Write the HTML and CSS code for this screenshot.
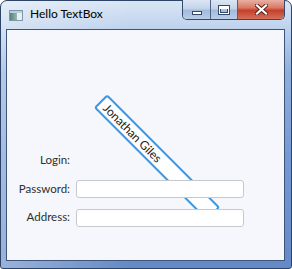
FILE: index.html
```html
<!DOCTYPE html>
<html>
<head>
<meta charset="utf-8">
<title>Hello TextBox</title>
<link rel="stylesheet" href="styles.css">
</head>
<body>
<div class="window">
  <div class="titlebar">
    <svg class="app-icon" width="14" height="11" viewBox="0 0 14 11">
      <defs>
        <linearGradient id="ig" x1="0" y1="0" x2="1" y2="0">
          <stop offset="0" stop-color="#4f7f74"/>
          <stop offset="0.5" stop-color="#8fb0a8"/>
          <stop offset="1" stop-color="#d9e4ee"/>
        </linearGradient>
      </defs>
      <rect x="0.5" y="0.5" width="13" height="10" fill="url(#ig)" stroke="#7d96a8"/>
      <rect x="1" y="1" width="12" height="2" fill="#b9cfe0"/>
      <rect x="8" y="3" width="5" height="7" fill="#e6eef6"/>
    </svg>
    <span class="title">Hello TextBox</span>
    <div class="caption-buttons">
      <div class="cbtn cbtn-min">
        <svg width="12" height="6" viewBox="0 0 12 6"><rect x="1.5" y="1.5" width="9" height="3" fill="#fff" stroke="#34496b"/></svg>
      </div>
      <div class="cbtn cbtn-max">
        <svg width="12" height="10" viewBox="0 0 12 10"><rect x="1.5" y="1.5" width="9" height="7" fill="none" stroke="#34496b" stroke-width="3"/><rect x="1.5" y="1.5" width="9" height="7" fill="none" stroke="#fff" stroke-width="1"/><rect x="2" y="2" width="8" height="2" fill="#fff"/></svg>
      </div>
      <div class="cbtn cbtn-close">
        <svg width="13" height="11" viewBox="0 0 13 11"><path d="M2 1.5 L11 9.5 M11 1.5 L2 9.5" stroke="#5a2018" stroke-width="4" stroke-linecap="square"/><path d="M2 1.5 L11 9.5 M11 1.5 L2 9.5" stroke="#fff" stroke-width="2.2" stroke-linecap="square"/></svg>
      </div>
    </div>
  </div>
  <div class="client">
    <div class="form">
      <span class="label">Login:</span>
      <span class="empty"></span>
      <span class="label">Password:</span>
      <input class="field" type="text">
      <span class="label label-addr">Address:</span>
      <input class="field" type="text">
    </div>
    <div class="rotated-field">Jonathan Giles</div>
  </div>
</div>
</body>
</html>
```
FILE: styles.css
```css
html, body {
  margin: 0;
  padding: 0;
}
body {
  width: 292px;
  height: 269px;
  overflow: hidden;
  font-family: Lato, "Open Sans", sans-serif;
  background: #fff;
}
.window {
  box-sizing: border-box;
  width: 292px;
  height: 269px;
  border: 1px solid #2b4468;
  border-radius: 7px 7px 3px 3px;
  padding: 0 6px 7px 5px;
  display: flex;
  flex-direction: column;
  background:
    linear-gradient(to right, rgba(255,255,255,0.35), rgba(255,255,255,0) 45%),
    linear-gradient(to bottom, #d9e5f5 0, #c2d5ee 24px, #8fafdd 70px, #7398d2 160px, #6489c6 100%);
}
.titlebar {
  height: 28px;
  display: flex;
  align-items: flex-start;
}
.app-icon {
  margin: 9px 0 0 3px;
  flex: none;
}
.title {
  margin: 5px 0 0 7px;
  font-size: 12px;
  line-height: 16px;
  color: #000;
}
.caption-buttons {
  margin: -1px 0 0 auto;
  display: flex;
  height: 20px;
  box-sizing: border-box;
  border: 1px solid #34496b;
  border-top: none;
  border-radius: 0 0 5px 5px;
  overflow: hidden;
}
.cbtn {
  display: flex;
  align-items: center;
  justify-content: center;
  box-sizing: border-box;
  height: 19px;
}
.cbtn-min {
  width: 28px;
  border-right: 1px solid #4d6284;
  background: linear-gradient(to bottom, #dbe6f4 0, #c3d4ea 45%, #a3bbdc 55%, #b8cde8 100%);
}
.cbtn-min svg { margin-top: 6px; }
.cbtn-max {
  width: 27px;
  border-right: 1px solid #4d6284;
  background: linear-gradient(to bottom, #dbe6f4 0, #c3d4ea 45%, #a3bbdc 55%, #b8cde8 100%);
}
.cbtn-close {
  width: 46px;
  background: linear-gradient(to bottom, #eab0a2 0, #d97a66 40%, #c4402a 55%, #d5705a 100%);
}
.client {
  flex: 1;
  position: relative;
  border: 1px solid #3e5579;
  background: #f5f7fc;
  overflow: hidden;
}
.form {
  display: grid;
  grid-template-columns: 56px 168px;
  grid-auto-rows: 18px;
  column-gap: 6px;
  row-gap: 11px;
  margin: 121px 0 0 7px;
}
.label {
  font-size: 11.5px;
  color: #2e2e2e;
  text-align: right;
  align-self: center;
  line-height: 14px;
  white-space: nowrap;
}
.label-addr {
  align-self: start;
  margin-top: 1px;
}
.field {
  position: relative;
  z-index: 1;
  box-sizing: border-box;
  width: 168px;
  height: 18px;
  margin: 0;
  padding: 0 4px;
  border: 1px solid #c6c9cd;
  border-radius: 3px;
  background: #fff;
  font: inherit;
  font-size: 12px;
  outline: none;
}
.rotated-field {
  position: absolute;
  left: 69.5px;
  top: 117.5px;
  width: 160px;
  height: 19px;
  box-sizing: border-box;
  border: 2px solid #3e97df;
  border-radius: 3px;
  background: #fff;
  transform: rotate(45deg);
  font-size: 12px;
  line-height: 15px;
  padding-left: 5px;
  color: #222;
  white-space: nowrap;
}
```
